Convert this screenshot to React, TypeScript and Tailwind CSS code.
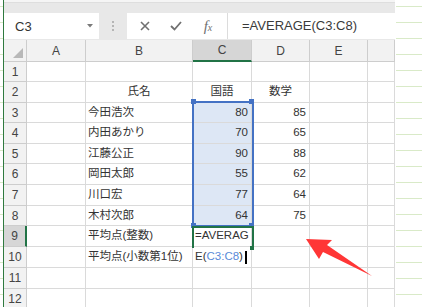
const colW = ["w-[59px]", "w-[107px]", "w-[59px]", "w-[58px]", "w-[58px]", "w-[27px]"];
const colNames = ["A", "B", "C", "D", "E", ""];
const rowH = ["h-[20px]", "h-[21px]", "h-[20px]", "h-[21px]", "h-[20px]", "h-[21px]", "h-[21px]", "h-[20px]", "h-[21px]", "h-[21px]", "h-[21px]", "h-[21px]"];

type Cell = { text?: React.ReactNode; align?: "left" | "center" | "right" };

const scores: [string, string, string][] = [
  ["今田浩次", "80", "85"],
  ["内田あかり", "70", "65"],
  ["江藤公正", "90", "88"],
  ["岡田太郎", "55", "62"],
  ["川口宏", "77", "64"],
  ["木村次郎", "64", "75"],
];

const rows: Cell[][] = [
  [],
  [{}, { text: "氏名", align: "center" }, { text: "国語", align: "center" }, { text: "数学", align: "center" }],
  ...scores.map(([n, a, b]) => [{}, { text: n }, { text: a, align: "right" as const }, { text: b, align: "right" as const }]),
  [{}, { text: "平均点(整数)" }, { text: "=AVERAG" }],
  [
    {},
    { text: "平均点(小数第1位)" },
    {
      text: (
        <>
          E(<span className="text-[#5a8ad8]">C3:C8</span>)
          <span className="ml-[2px] inline-block w-[2px] h-[13px] bg-black align-middle" />
        </>
      ),
    },
  ],
  [],
  [],
];

function GreenLines({ className }: { className: string }) {
  return (
    <div className={`flex flex-col bg-white ${className}`}>
      <div className="h-[7px] shrink-0 border-b border-[#d9eac8]" />
      {Array.from({ length: 19 }).map((_, i) => (
        <div key={i} className="h-[16px] shrink-0 border-b border-[#d9eac8]" />
      ))}
    </div>
  );
}

function Toolbar() {
  return (
    <div className="h-[48px] bg-[#e8e8e8] flex flex-col">
      <div className="h-[3px] bg-[#f5f5f5] border-b border-[#dedede]" />
      <div className="flex pt-[10px] h-[37px]">
        <div className="w-[95px] h-[26px] bg-white flex items-center justify-between pl-[11px] pr-[6px]">
          <span className="text-[13px] text-[#333] pt-[2px]">C3</span>
          <svg width="6" height="4" viewBox="0 0 6 4">
            <path d="M0 0h6L3 3.5z" fill="#7a7a7a" />
          </svg>
        </div>
        <div className="w-[28px] h-[26px] flex flex-col items-center justify-center gap-[2px]">
          <span className="w-[2px] h-[2px] bg-[#b5b5b5]" />
          <span className="w-[2px] h-[2px] bg-[#b5b5b5]" />
          <span className="w-[2px] h-[2px] bg-[#b5b5b5]" />
        </div>
        <div className="flex-1 h-[26px] bg-white flex items-center">
          <div className="w-[36px] flex justify-center">
            <svg width="10" height="10" viewBox="0 0 10 10">
              <path d="M1 1l8 8M9 1l-8 8" stroke="#707070" strokeWidth="1.6" />
            </svg>
          </div>
          <div className="w-[26px] flex justify-center">
            <svg width="12" height="10" viewBox="0 0 12 10">
              <path d="M1 5l3.5 3.5L11 1" stroke="#707070" strokeWidth="1.8" fill="none" />
            </svg>
          </div>
          <div className="w-[38px] flex justify-center">
            <span className="font-['Liberation_Serif',serif] italic text-[15px] text-[#707070] leading-none">
              f<span className="text-[10px]">x</span>
            </span>
          </div>
          <div className="w-px h-[26px] bg-[#dcdcdc]" />
          <span className="pl-[14px] text-[13px] text-[#3a3a3a]">=AVERAGE(C3:C8)</span>
        </div>
      </div>
    </div>
  );
}

function Grid() {
  return (
    <div className="relative">
      <div className="flex h-[22px]">
        <div className="w-[23px] bg-[#f2f2f2] border-r border-b border-[#cdcdcd] flex items-end justify-end pr-[3px] pb-[3px]">
          <svg width="10" height="10" viewBox="0 0 10 10">
            <path d="M10 0v10H0z" fill="#b8b8b8" />
          </svg>
        </div>
        {colNames.map((c, i) => (
          <div
            key={i}
            className={`${colW[i]} flex items-center justify-center text-[12px] text-[#444] border-r border-[#cdcdcd] ${
              c === "C" ? "bg-[#d6d6d6] border-b-2 border-b-[#217346]" : "bg-[#f2f2f2] border-b"
            }`}
          >
            {c}
          </div>
        ))}
      </div>
      {rowH.map((h, r) => (
        <div key={r} className={`flex ${h}`}>
          <div
            className={`w-[23px] flex items-center justify-center text-[12px] text-[#444] border-b border-[#cdcdcd] ${
              r === 8 ? "bg-[#d6d6d6] border-r-2 border-r-[#217346]" : "bg-[#f2f2f2] border-r"
            }`}
          >
            {r + 1}
          </div>
          {colW.map((w, c) => {
            const cell = rows[r]?.[c];
            const sel = c === 2 && r >= 2 && r <= 7;
            return (
              <div
                key={c}
                className={`${w} flex items-center border-r border-b border-[#dadada] text-[11.5px] text-[#333] whitespace-nowrap overflow-visible ${
                  sel ? "bg-[#dde7f5]" : ""
                } ${
                  cell?.align === "right" ? "justify-end pr-[3px]" : cell?.align === "center" ? "justify-center" : "pl-[2px]"
                }`}
              >
                {cell?.text}
              </div>
            );
          })}
        </div>
      ))}

      {/* C3:C8 range */}
      <div className="absolute left-[188px] top-[61px] w-[62px] h-[126px] border-2 border-[#4472c4]" />
      <div className="absolute left-[187px] top-[59px] w-[5px] h-[5px] bg-[#4472c4]" />
      <div className="absolute left-[245px] top-[59px] w-[5px] h-[5px] bg-[#4472c4]" />
      <div className="absolute left-[187px] top-[183px] w-[5px] h-[5px] bg-[#4472c4]" />
      <div className="absolute left-[245px] top-[183px] w-[5px] h-[5px] bg-[#4472c4]" />

      {/* active cell C9 */}
      <div className="absolute left-[188px] top-[186px] w-[62px] h-[22px] border-2 border-b-0 border-[#217346]" />
      <div className="absolute left-[246px] top-[206px] w-[4px] h-[4px] bg-[#217346]" />
    </div>
  );
}

export default function App() {
  return (
    <div className="relative w-[422px] h-[307px] overflow-hidden bg-white flex font-['Liberation_Sans','Noto_Sans_CJK_JP',sans-serif]">
      <GreenLines className="w-[3px]" />
      <div className="w-px bg-[#2f7a3f]" />
      <div className="w-[391px] shrink-0 flex flex-col">
        <Toolbar />
        <Grid />
      </div>
      <GreenLines className="w-[27px] pl-px" />

      <svg className="absolute left-0 top-0" width="422" height="307" viewBox="0 0 422 307">
        <path d="M306 239L332 240L327 245L372 276L323 252L319 259Z" fill="#ff3636" />
      </svg>
    </div>
  );
}
